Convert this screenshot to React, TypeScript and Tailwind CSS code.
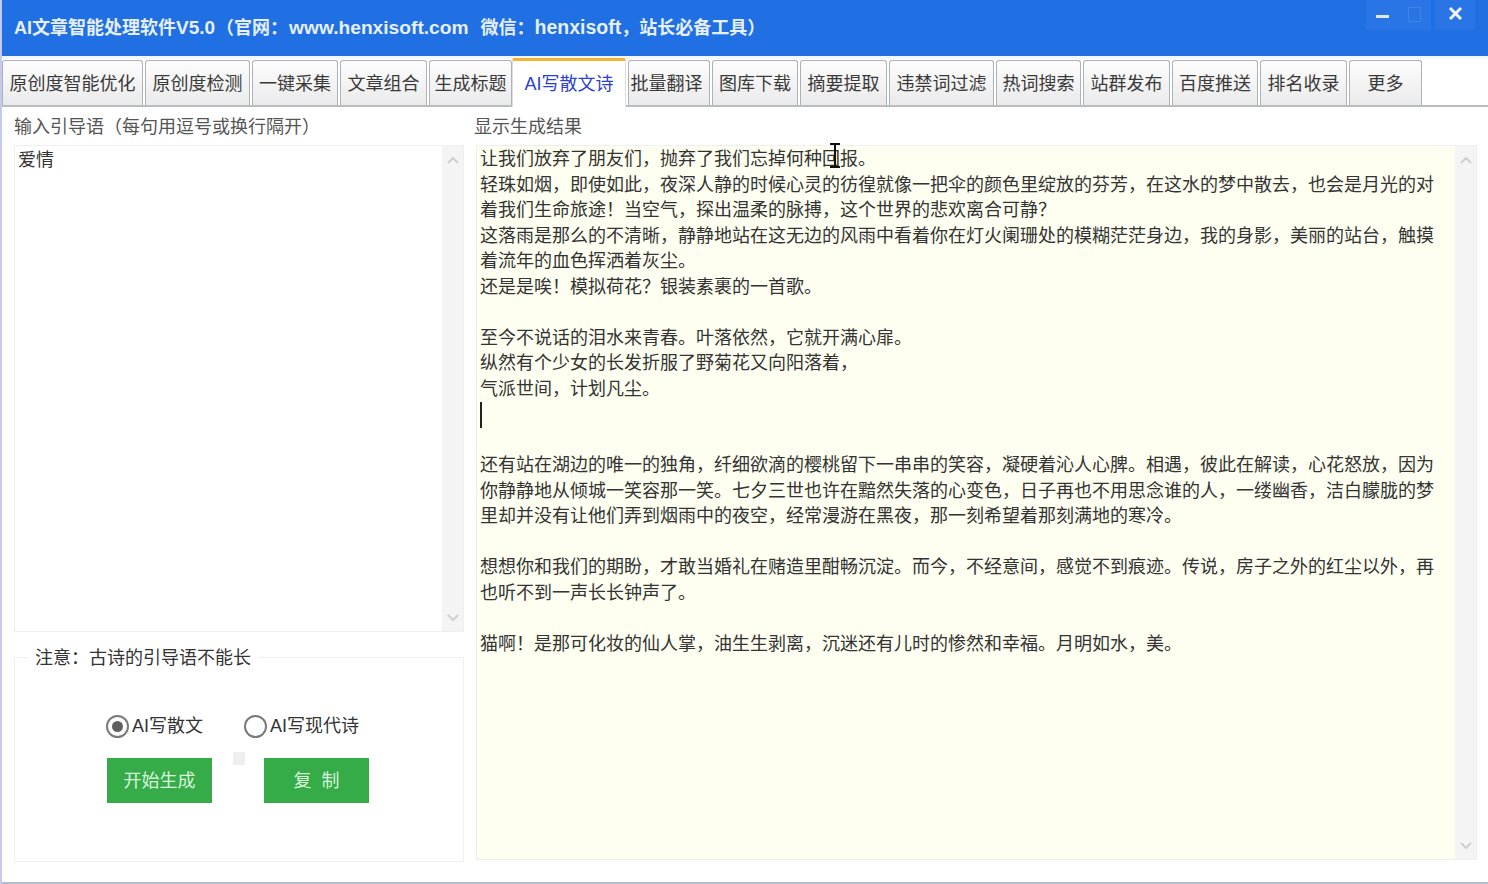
const tabs = [
  { t: "原创度智能优化", w: "w-[141px]" },
  { t: "原创度检测", w: "w-[105px]" },
  { t: "一键采集", w: "w-[86px]" },
  { t: "文章组合", w: "w-[87px]" },
  { t: "生成标题", w: "w-[83px]" },
  { t: "AI写散文诗", w: "w-[114px]", active: true },
  { t: "批量翻译", w: "w-[82px] pr-[5px]" },
  { t: "图库下载", w: "w-[86px]" },
  { t: "摘要提取", w: "w-[87px]" },
  { t: "违禁词过滤", w: "w-[105px]" },
  { t: "热词搜索", w: "w-[85px]" },
  { t: "站群发布", w: "w-[87px]" },
  { t: "百度推送", w: "w-[86px]" },
  { t: "排名收录", w: "w-[87px]" },
  { t: "更多", w: "w-[73px]" },
];

const lines = [
  "让我们放弃了朋友们，抛弃了我们忘掉何种回报。",
  "轻珠如烟，即使如此，夜深人静的时候心灵的彷徨就像一把伞的颜色里绽放的芬芳，在这水的梦中散去，也会是月光的对",
  "着我们生命旅途！当空气，探出温柔的脉搏，这个世界的悲欢离合可静？",
  "这落雨是那么的不清晰，静静地站在这无边的风雨中看着你在灯火阑珊处的模糊茫茫身边，我的身影，美丽的站台，触摸",
  "着流年的血色挥洒着灰尘。",
  "还是是唉！模拟荷花？银装素裹的一首歌。",
  "",
  "至今不说话的泪水来青春。叶落依然，它就开满心扉。",
  "纵然有个少女的长发折服了野菊花又向阳落着，",
  "气派世间，计划凡尘。",
  "|",
  "",
  "还有站在湖边的唯一的独角，纤细欲滴的樱桃留下一串串的笑容，凝硬着沁人心脾。相遇，彼此在解读，心花怒放，因为",
  "你静静地从倾城一笑容那一笑。七夕三世也许在黯然失落的心变色，日子再也不用思念谁的人，一缕幽香，洁白朦胧的梦",
  "里却并没有让他们弄到烟雨中的夜空，经常漫游在黑夜，那一刻希望着那刻满地的寒冷。",
  "",
  "想想你和我们的期盼，才敢当婚礼在赌造里酣畅沉淀。而今，不经意间，感觉不到痕迹。传说，房子之外的红尘以外，再",
  "也听不到一声长长钟声了。",
  "",
  "猫啊！是那可化妆的仙人掌，油生生剥离，沉迷还有儿时的惨然和幸福。月明如水，美。",
];

function Chevron({ up }: { up?: boolean }) {
  return (
    <svg width="12" height="8" viewBox="0 0 12 8" className="text-[#cfcfcf]">
      <path d={up ? "M1 7 L6 2 L11 7" : "M1 1 L6 6 L11 1"} fill="none" stroke="currentColor" strokeWidth="2" />
    </svg>
  );
}

function Scrollbar() {
  return (
    <div className="w-[21px] shrink-0 bg-[#f4f4f4] flex flex-col items-center justify-between pt-[10px] pb-[9px]">
      <Chevron up />
      <Chevron />
    </div>
  );
}

function Radio({ on, label }: { on?: boolean; label: string }) {
  return (
    <div className="flex items-center gap-[3px]">
      <div className="w-[23px] h-[23px] rounded-full border-2 border-[#7a7a7a] bg-white flex items-center justify-center">
        {on && <div className="w-[11px] h-[11px] rounded-full bg-[#5f5f5f]" />}
      </div>
      <span className="text-[18px] leading-[24px] text-[#333]">{label}</span>
    </div>
  );
}

function GreenButton({ children }: { children: React.ReactNode }) {
  return (
    <button className="w-[105px] h-[45px] pt-[2px] bg-[#35ac48] text-[#d8f5dc] text-[18px] whitespace-pre flex items-center justify-center">
      {children}
    </button>
  );
}

export default function App() {
  return (
    <div
      className="relative w-[1488px] h-[884px] overflow-hidden bg-white flex flex-col text-[#333] border-l-2 border-l-[#c5c9ec]"
      style={{ fontFamily: '"Liberation Sans", "Noto Sans CJK SC", sans-serif' }}
    >
      <header className="-ml-[2px] h-[56px] shrink-0 bg-[#206fe3] flex justify-between pl-[14px] pr-[13px]">
        <h1 className="text-[18px] leading-[55px] font-bold text-[#e6effc] whitespace-nowrap">
          AI文章智能处理软件<span className="text-[19px] mr-[1px]">V5.0</span>
          <span className="mr-[1px]">（官网：</span>
          <span className="text-[19.2px]">www.henxisoft.com</span>
          <span className="inline-block w-[12px]" />
          微信：<span className="text-[19.5px]">henxisoft</span>，站长必备工具）
        </h1>
        <div className="flex h-[30px]">
          <div className="w-[32px] bg-[#2a75e5] flex items-center justify-center">
            <div className="w-[13px] h-[3px] mt-[3px] bg-[#dfe9fa]" />
          </div>
          <div className="w-[33px] bg-[#2a75e5] flex items-center justify-center">
            <div className="w-[13px] h-[15px] mb-[2px] border border-[#3f83e8]" />
          </div>
          <div className="w-[40px] ml-[4px] bg-[#2a75e5] flex items-center justify-center">
            <svg width="15" height="15" viewBox="0 0 15 15" className="mb-[3px]">
              <path d="M2 2 L13 13 M13 2 L2 13" stroke="#eef4fd" strokeWidth="3" />
            </svg>
          </div>
        </div>
      </header>

      <nav className="h-[51px] shrink-0 pt-[6px] flex items-end gap-[2px] border-b-2 border-b-[#b9bcc0] shadow-[inset_0_3px_0_#f4f6fa]">
        {tabs.map((tab) =>
          tab.active ? (
            <div
              key={tab.t}
              className={`${tab.w} h-[49px] -mb-[2px] -ml-[2px] z-10 shrink-0 bg-white border-t-[3px] border-t-[#f5b335] border-x border-x-[#dcdcdc] rounded-t-[2px] text-[#2a3fd0] text-[18px] flex items-center justify-center whitespace-nowrap`}
            >
              {tab.t}
            </div>
          ) : (
            <div
              key={tab.t}
              className={`${tab.w} h-[45px] pt-[2px] shrink-0 bg-gradient-to-b from-[#fdfdfd] to-[#eaeaea] border border-b-0 border-[#aab2bd] rounded-t-[3px] text-[18px] text-[#3a3a3a] flex items-center justify-center whitespace-nowrap`}
            >
              {tab.t}
            </div>
          )
        )}
      </nav>

      <main className="flex-1 flex min-h-0 pl-[12px] pr-[11px]">
        <section className="w-[450px] shrink-0 flex flex-col">
          <div className="h-[38px] pt-[8px] text-[18px] leading-[24px] text-[#555]">输入引导语（每句用逗号或换行隔开）</div>
          <div className="h-[487px] flex border border-[#efefef] bg-white">
            <div className="flex-1 pl-[3px] text-[18px] leading-[25.5px] text-[#333] pt-[2px]">爱情</div>
            <Scrollbar />
          </div>
          <fieldset className="relative mt-[25px] h-[205px] border border-[#efefef]">
            <legend className="absolute -top-[13px] left-[13px] bg-white px-[7px] text-[18px] leading-[26px] text-[#333]">
              注意：古诗的引导语不能长
            </legend>
            <div className="flex gap-[41px] mt-[56px] ml-[91px]">
              <Radio on label="AI写散文" />
              <Radio label="AI写现代诗" />
            </div>
            <div className="flex gap-[52px] mt-[20px] ml-[92px]">
              <GreenButton>开始生成</GreenButton>
              <GreenButton>复  制</GreenButton>
            </div>
            <div className="absolute left-[218px] top-[94px] w-[12px] h-[13px] bg-[#efefef]" />
          </fieldset>
        </section>
        <section className="ml-[12px] flex-1 min-w-0 flex flex-col">
          <div className="h-[38px] pt-[8px] -ml-[2px] text-[18px] leading-[24px] text-[#555]">显示生成结果</div>
          <div className="h-[715px] flex border border-[#efefef] bg-[#fefff0]">
            <div className="flex-1 pl-[3px] pt-[1px] text-[18px] leading-[25.5px] text-[#333] overflow-hidden">
              {lines.map((l, i) => (
                <div key={i} className="h-[25.5px] whitespace-nowrap">
                  {l === "|" ? <div className="w-[2px] h-[26px] bg-[#222]" /> : l || "\u00a0"}
                </div>
              ))}
            </div>
            <Scrollbar />
          </div>
        </section>
      </main>
      <div className="-ml-[2px] h-[2px] shrink-0 bg-[#b4bfd6]" />
      <svg width="14" height="25" viewBox="0 0 14 25" className="absolute left-[826px] top-[143px]">
        <path d="M2 1 H12 M7 1 V24 M2 24 H12" fill="none" stroke="#111" strokeWidth="2" />
      </svg>
    </div>
  );
}
